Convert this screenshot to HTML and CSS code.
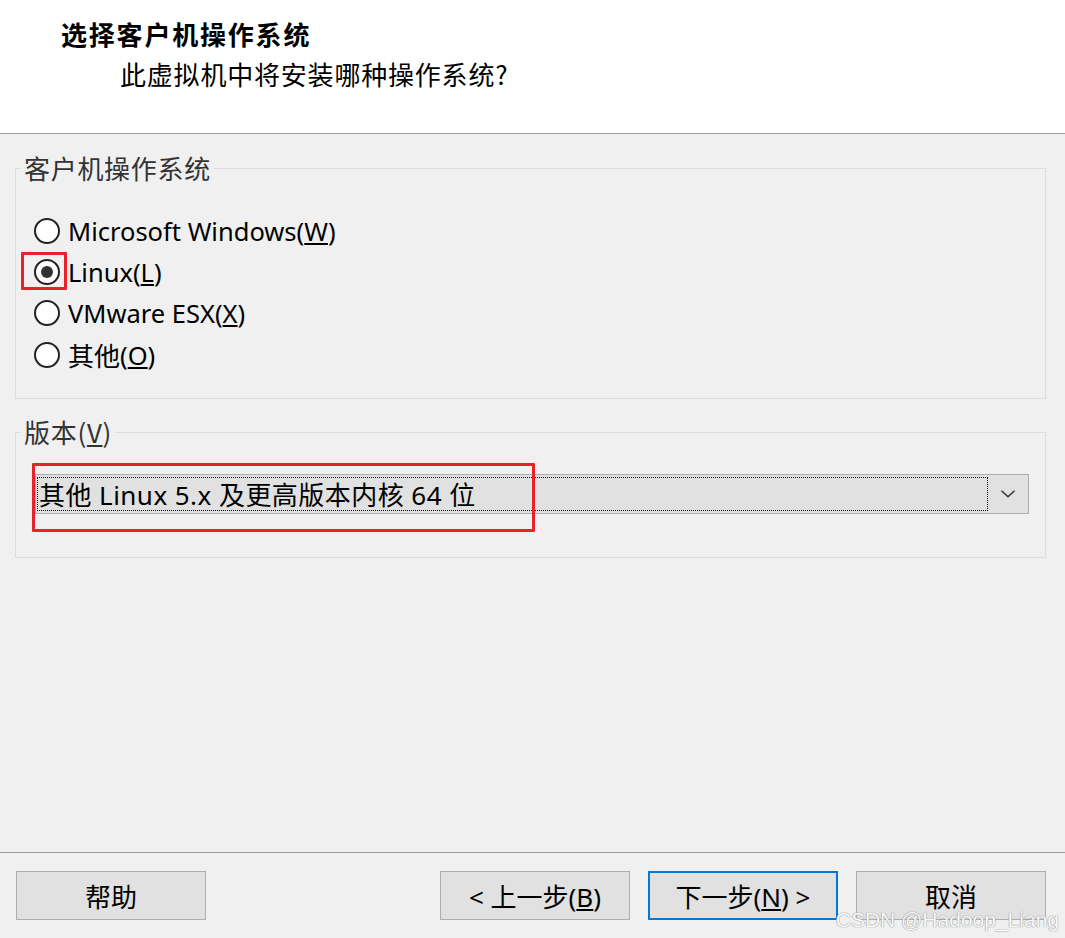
FILE: index.html
```html
<!DOCTYPE html>
<html lang="zh-CN">
<head>
    <meta charset="UTF-8">
    <meta name="viewport" content="width=device-width, initial-scale=1.0">
    <title>新建虚拟机向导</title>
    <link rel="stylesheet" href="styles.css">
</head>
<body>
    <div class="wizard">
        <!-- 标题区域 -->
        <header class="head">
            <div class="head-title">选择客户机操作系统</div>
            <div class="head-sub">此虚拟机中将安装哪种操作系统?</div>
        </header>

        <main class="content">
            <fieldset class="group">
                <legend>客户机操作系统</legend>
                <div class="group-body group-os">
                    <label class="radio-row"><span class="radio"></span>Microsoft Windows(<u>W</u>)</label>
                    <label class="radio-row"><span class="radio checked"></span>Linux(<u>L</u>)<span class="mark mark-radio"></span></label>
                    <label class="radio-row"><span class="radio"></span>VMware ESX(<u>X</u>)</label>
                    <label class="radio-row"><span class="radio"></span><span class="cjk">其他</span>(<u>O</u>)</label>
                </div>
            </fieldset>

            <fieldset class="group group-second">
                <legend>版本(<u>V</u>)</legend>
                <div class="group-body group-ver">
                    <div class="combo">
                        <span class="combo-value">其他 Linux 5.x 及更高版本内核 64 位</span>
                        <span class="combo-arrow">
                            <svg width="14" height="8" viewBox="0 0 14 8"><polyline points="0.5,0.8 7,6.8 13.5,0.8" fill="none" stroke="#333" stroke-width="1.5"/></svg>
                        </span>
                    </div>
                    <span class="mark mark-combo"></span>
                </div>
            </fieldset>
        </main>

        <!-- 底部按钮 -->
        <footer class="foot">
            <button class="btn">帮助</button>
            <span class="spacer"></span>
            <button class="btn">&lt; 上一步(<u>B</u>)</button>
            <button class="btn btn-default">下一步(<u>N</u>) &gt;</button>
            <button class="btn">取消</button>
        </footer>

        <div class="watermark">CSDN @Hadoop_Liang</div>
    </div>
</body>
</html>
```

FILE: styles.css
```css
/* 页面基础 */
body {
    margin: 0;
    font-family: "Noto Sans", "Noto Sans CJK SC", sans-serif;
    color: #000;
}

.wizard {
    position: relative;
    width: 1065px;
    height: 938px;
    display: flex;
    flex-direction: column;
    background: #f0f0f0;
    overflow: hidden;
}

/* 标题区域 */
.head {
    height: 134px;
    box-sizing: border-box;
    padding-top: 19px;
    background: #fff;
    border-bottom: 1px solid #a0a0a0;
    font-family: "Noto Sans CJK SC", sans-serif;
}

.head-title {
    padding-left: 61px;
    font-size: 26px;
    line-height: 30px;
    font-weight: bold;
    letter-spacing: 1.8px;
}

.head-sub {
    margin-top: 10px;
    padding-left: 120px;
    font-size: 26px;
    line-height: 30px;
    letter-spacing: 0.8px;
}

/* 中间内容 */
.content {
    flex: 1;
    padding: 19px 19px 0 15px;
}

.group {
    margin: 0;
    padding: 0;
    min-width: 0;
    border: 1px solid #dcdcdc;
}

.group legend {
    margin-left: 5px;
    padding: 0 3px;
    font-family: "Noto Sans CJK SC", sans-serif;
    font-size: 26px;
    line-height: 30px;
    letter-spacing: 0.7px;
    color: #333;
}

.group-second {
    margin-top: 18px;
}

.group-body {
    position: relative;
}

.group-os {
    padding: 27px 0 23px 18px;
}

.group-ver {
    padding: 27px 16px 43px 19px;
}

.radio-row {
    position: relative;
    display: flex;
    align-items: center;
    height: 41.3px;
    font-size: 25.5px;
}

.cjk {
    font-family: "Noto Sans CJK SC", sans-serif;
    font-size: 26px;
}

.radio {
    width: 22px;
    height: 22px;
    margin-right: 8px;
    border: 2px solid #222;
    border-radius: 50%;
    background: #fff;
    display: flex;
    align-items: center;
    justify-content: center;
}

.radio.checked::after {
    content: "";
    width: 12px;
    height: 12px;
    border-radius: 50%;
    background: #333;
}

/* 下拉框 */
.combo {
    display: flex;
    height: 40px;
    box-sizing: border-box;
    padding: 2px 0 2px 1px;
    background: #e1e1e1;
    border: 1px solid #adadad;
}

.combo-value {
    flex: 1;
    display: flex;
    align-items: center;
    padding-left: 1px;
    border: 1px dotted #000;
    font-size: 26px;
    letter-spacing: 0.45px;
    white-space: nowrap;
}

.combo-arrow {
    width: 40px;
    display: flex;
    align-items: center;
    justify-content: center;
}

/* 红框标注 */
.mark {
    position: absolute;
    border: 3px solid #e8222b;
    border-radius: 1px;
}

.mark-radio {
    left: -13px;
    top: 1px;
    width: 40px;
    height: 32px;
}

.mark-combo {
    left: 16px;
    top: 16px;
    width: 497px;
    height: 63px;
}

/* 底部按钮 */
.foot {
    display: flex;
    gap: 18px;
    height: 86px;
    box-sizing: border-box;
    padding: 18px 19px 0 16px;
    border-top: 1px solid #a0a0a0;
}

.spacer {
    flex: 1;
}

.btn {
    width: 190px;
    height: 49px;
    padding: 0;
    background: #e1e1e1;
    border: 1px solid #adadad;
    font-family: "Noto Sans", "Noto Sans CJK SC", sans-serif;
    font-size: 26px;
    color: #000;
}

.btn-default {
    border: 2px solid #0078d7;
}

.watermark {
    position: absolute;
    right: 6px;
    bottom: 6px;
    font-family: "Liberation Sans", sans-serif;
    font-size: 21px;
    color: #fafafa;
    text-shadow: 0 0 1px #8a8a8a, 0 0 1px #8a8a8a;
}
```
